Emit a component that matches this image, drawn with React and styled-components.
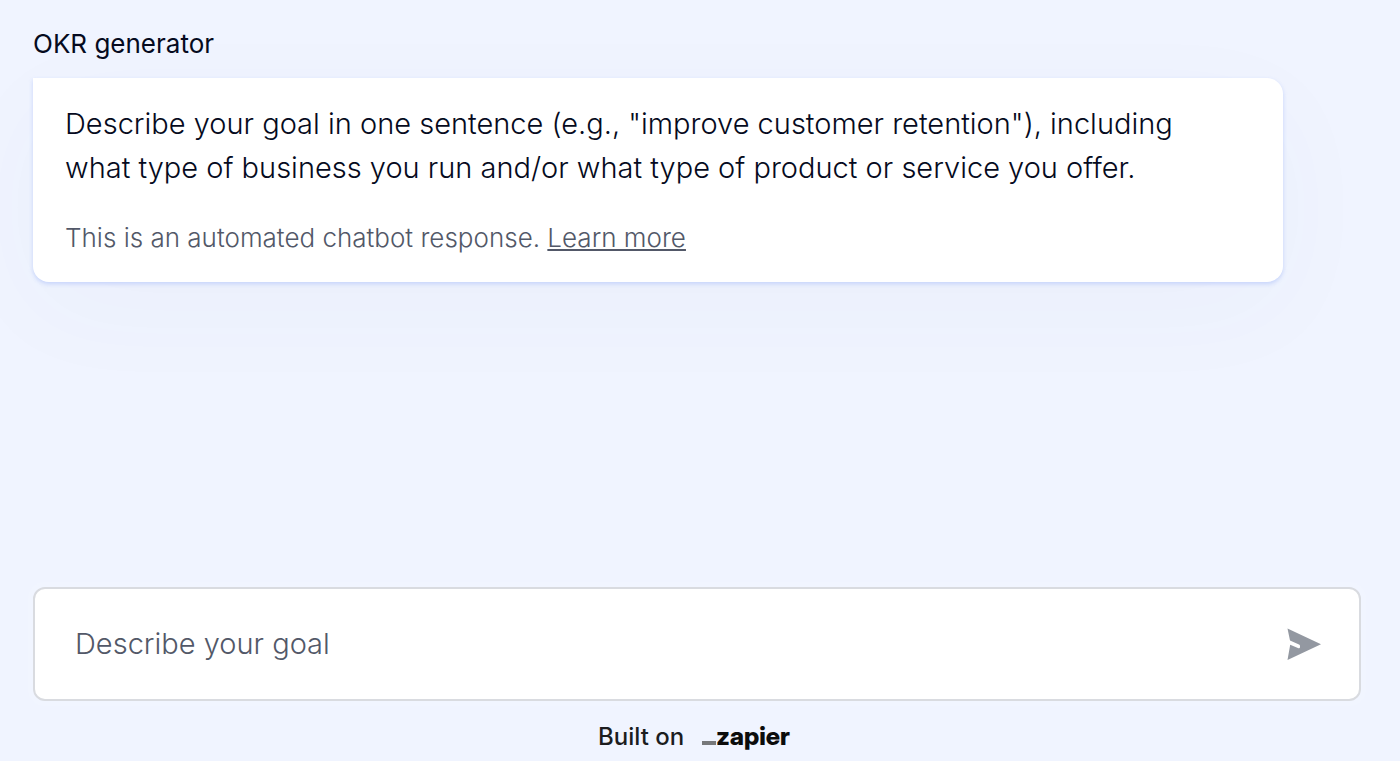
import React, { useState } from "react";
import styled, { createGlobalStyle } from "styled-components";

const text = {
    bot: "OKR generator",
    message:
        'Describe your goal in one sentence (e.g., "improve customer retention"), including what type of business you run and/or what type of product or service you offer.',
    automated: "This is an automated chatbot response.",
    learnMore: "Learn more",
    placeholder: "Describe your goal",
    builtOn: "Built on",
    brand: "zapier"
};

const SendIcon = () => (
    <svg width="34" height="32" viewBox="0 0 34 32" aria-hidden="true">
        <path
            d="M0.5 0.5 L34 16.2 L0.5 32 L3.2 16.8 L11.5 20.2 Q13 20.6 13 19 V18 Q13 16.8 12 16.4 L3 12.6 Z"
            fill="#9398a1"
        />
    </svg>
);

const App = () => {
    const [goal, setGoal] = useState("");

    return (
        <>
            <GlobalStyle />
            <Page>
                <Conversation>
                    <BotName>{text.bot}</BotName>
                    <MessageCard>
                        <Message>{text.message}</Message>
                        <Disclaimer>
                            {text.automated} <LearnMore href="#learn-more">{text.learnMore}</LearnMore>
                        </Disclaimer>
                    </MessageCard>
                </Conversation>
                <Composer onSubmit={e => e.preventDefault()}>
                    <GoalInput
                        aria-label={text.placeholder}
                        placeholder={text.placeholder}
                        value={goal}
                        onChange={e => setGoal(e.target.value)}
                    />
                    <SendButton type="submit" aria-label="Send">
                        <SendIcon />
                    </SendButton>
                </Composer>
                <Footer>
                    {text.builtOn}
                    <Brand href="#zapier">
                        <BrandDash />
                        {text.brand}
                    </Brand>
                </Footer>
            </Page>
        </>
    );
};

const GlobalStyle = createGlobalStyle`
    * {
        box-sizing: border-box;
    }

    body {
        margin: 0;
        background: #f0f4ff;
        font-family: Inter, "Liberation Sans", sans-serif;
        color: #050a20;
    }
`;

const Page = styled.main`
    display: flex;
    flex-direction: column;
    min-height: 100vh;
    padding: 24px 39px 0 33px;
    overflow: hidden;
`;

const Conversation = styled.section`
    flex: 1;
    padding-right: 78px;
`;

const BotName = styled.h1`
    margin: 0 0 14px;
    font-size: 26px;
    font-weight: 400;
    line-height: 40px;
`;

const MessageCard = styled.article`
    padding: 24px 48px 24px 32px;
    background: #fff;
    border-radius: 0 16px 16px 16px;
    box-shadow: 0 2px 4px rgba(150, 175, 250, 0.45), 0 28px 110px rgba(60, 80, 140, 0.03);
`;

const Message = styled.p`
    margin: 0;
    font-size: 29px;
    font-weight: 300;
    line-height: 44px;
`;

const Disclaimer = styled.p`
    margin: 28px 0 0;
    font-size: 26px;
    font-weight: 300;
    line-height: 40px;
    color: #525868;
`;

const LearnMore = styled.a`
    color: inherit;
`;

const Composer = styled.form`
    display: flex;
    align-items: center;
    height: 114px;
    padding: 0 38px 0 40px;
    background: #fff;
    border: 2px solid #d9dbe0;
    border-radius: 12px;
    box-shadow: 0 0 0 5px #f1f5ff;
`;

const GoalInput = styled.input`
    flex: 1;
    min-width: 0;
    padding: 0;
    border: 0;
    outline: 0;
    background: none;
    font: 300 29px/44px Inter, sans-serif;
    color: inherit;

    &::placeholder {
        color: #525868;
        opacity: 1;
    }
`;

const SendButton = styled.button`
    display: flex;
    padding: 0;
    border: 0;
    background: none;
    cursor: pointer;
`;

const Footer = styled.footer`
    display: flex;
    align-items: center;
    justify-content: center;
    gap: 18px;
    height: 60px;
    padding: 10px 6px 0 0;
    font-size: 24px;
    font-weight: 500;
    color: #1c1d1f;
`;

const Brand = styled.a`
    display: flex;
    align-items: baseline;
    color: #0c0c0c;
    font-family: "Inter Display", Inter, sans-serif;
    font-size: 25px;
    font-weight: 800;
    text-decoration: none;
`;

const BrandDash = styled.span`
    width: 14px;
    height: 4px;
    background: #77787b;
`;

export default App;
